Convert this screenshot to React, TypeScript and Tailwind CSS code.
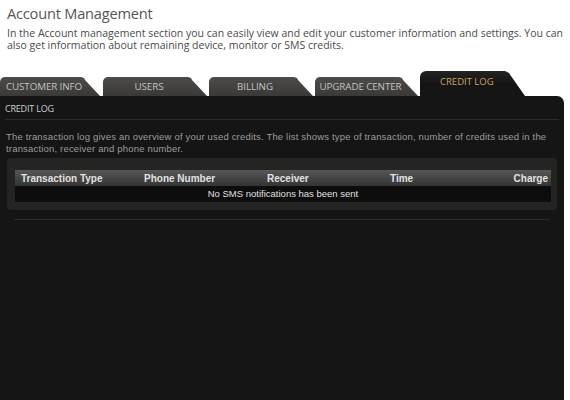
import React from 'react';

const tabs = [
  { label: 'Customer Info', width: 100, ml: 'ml-0' },
  { label: 'Users', width: 104, ml: 'ml-[3px]' },
  { label: 'Billing', width: 104, ml: 'ml-[2px]' },
  { label: 'Upgrade Center', width: 103, ml: 'ml-[2px]' },
];

const Tab = ({ label, width, ml }: { label: string; width: number; ml: string }) => (
  <div
    className={`${ml} h-[19px] shrink-0 rounded-tl-[5px] bg-gradient-to-b from-[#4d4c49] to-[#3a3937] [clip-path:polygon(0_0,calc(100%-19px)_0,calc(100%-16px)_1px,calc(100%-15px)_3px,100%_100%,0_100%)] flex items-center justify-center pr-[12px] pt-[1px] text-[9.8px] uppercase tracking-[-0.1px] text-[#c2c2c2]`}
    style={{ width }}
  >
    {label}
  </div>
);

const columns = ['Transaction Type', 'Phone Number', 'Receiver', 'Time'];

export default function App() {
  return (
    <div className="w-[570px] h-[400px] bg-white overflow-hidden flex flex-col font-['Open_Sans',sans-serif]">
      <div className="px-[7px] pt-[2px]">
        <h1 className="text-[14.6px] leading-[22px] text-[#555] tracking-[-0.2px]">Account Management</h1>
        <p className="mt-[3px] text-[10.5px] leading-[12px] text-[#4a4a4a]">
          In the Account management section you can easily view and edit your customer information and settings. You can also get
          information about remaining device, monitor or SMS credits.
        </p>
      </div>

      {/* tab strip */}
      <div className="mt-[20px] h-[25px] flex items-end">
        {tabs.map((t) => (
          <Tab key={t.label} label={t.label} width={t.width} ml={t.ml} />
        ))}
        <div className="ml-[2px] h-[25px] w-[107px] shrink-0 rounded-tl-[6px] bg-gradient-to-b from-[#232322] via-[#151515] to-[#141414] [clip-path:polygon(0_0,calc(100%-22px)_0,calc(100%-18px)_2px,calc(100%-16px)_5px,calc(100%-2px)_100%,0_100%)] pl-[20px] pt-[5px] text-[9.5px] leading-[12px] uppercase text-[#caa55f]">
          Credit Log
        </div>
      </div>

      {/* panel */}
      <div className="w-[564px] flex-1 bg-[#151515] rounded-tr-[7px] px-[5px] font-['Liberation_Sans',Arial,sans-serif]">
        <div className="pt-[7px] pb-[5px] border-b border-[#2c2c2b] font-['Open_Sans',sans-serif] text-[9px] leading-[11px] uppercase text-[#d0d0d0] tracking-[-0.2px]">
          Credit Log
        </div>
        <p className="mt-[11px] px-[1px] text-[9.5px] leading-[12px] tracking-[0.18px] text-[#9c9c9c]">
          The transaction log gives an overview of your used credits. The list shows type of transaction, number of credits used in the
          transaction, receiver and phone number.
        </p>

        <div className="mt-[3px] ml-[2px] w-[550px] rounded-[4px] bg-[#242422] pt-[12px] pb-[8px] pl-[8px] pr-[6px]">
          <div className="grid grid-cols-[123px_123px_123px_123px_1fr] h-[16px] items-center bg-gradient-to-b from-[#575757] to-[#343434] text-[10px] font-bold text-[#e2e2e2]">
            {columns.map((c) => (
              <div key={c} className="pl-[6px]">
                {c}
              </div>
            ))}
            <div className="text-right pr-[3px]">Charge</div>
          </div>
          <div className="h-[16px] flex items-center justify-center bg-[#0d0d0d] text-[9.5px] text-[#e0e0e0]">
            No SMS notifications has been sent
          </div>
        </div>

        <div className="mt-[9px] mx-[9px] h-px bg-[#2b2b2a]" />
      </div>
    </div>
  );
}
